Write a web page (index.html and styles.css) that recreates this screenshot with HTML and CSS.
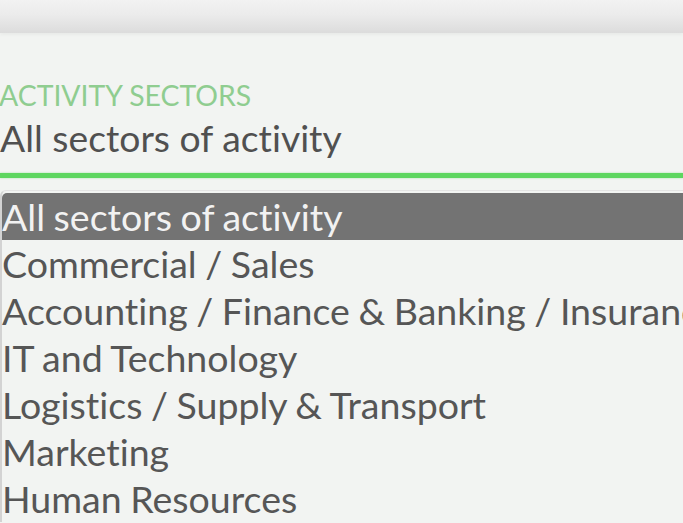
FILE: index.html
```html
<!DOCTYPE html>
<html lang="en">
<head>
<meta charset="utf-8">
<title>Activity sectors</title>
<link rel="stylesheet" href="styles.css">
</head>
<body>
<div class="topbar"></div>
<div class="field">
  <div class="field-label">ACTIVITY SECTORS</div>
  <div class="field-value">All sectors of activity</div>
  <div class="field-underline"></div>
</div>
<ul class="options">
  <li class="option selected">All sectors of activity</li>
  <li class="option">Commercial / Sales</li>
  <li class="option">Accounting / Finance &amp; Banking / Insurance</li>
  <li class="option">IT and Technology</li>
  <li class="option">Logistics / Supply &amp; Transport</li>
  <li class="option">Marketing</li>
  <li class="option">Human Resources</li>
</ul>
</body>
</html>
```
FILE: styles.css
```css
html, body {
  margin: 0;
  padding: 0;
}
body {
  width: 683px;
  height: 523px;
  overflow: hidden;
  background: #f2f4f2;
  font-family: Lato, "Open Sans", sans-serif;
  font-variant-ligatures: none;
  color: #555;
}
.topbar {
  height: 33px;
  background: linear-gradient(#f2f2f2 0%, #ebebeb 45%, #dcdcdc 100%);
  box-shadow: 0 2px 3px rgba(0,0,0,0.04);
}
.field {
  padding-top: 45px;
}
.field-label {
  font-size: 28.4px;
  line-height: 34px;
  color: #8fcd90;
  white-space: nowrap;
  margin-left: -1px;
}
.field-value {
  margin-top: 5.5px;
  font-size: 37.3px;
  line-height: 40px;
  color: #505050;
  white-space: nowrap;
}
.field-underline {
  margin-top: 15.5px;
  height: 5px;
  background: #5dd65f;
  box-shadow: 0 0 2px rgba(93,214,95,0.6);
}
.options {
  list-style: none;
  margin: 12px 0 0 0;
  padding: 2px 0 0 0;
  border-left: 2px solid #d3d3d3;
  border-top: 1px solid #e4e4e4;
  border-top-left-radius: 6px;
}
.option {
  height: 47px;
  line-height: 47px;
  font-size: 37.5px;
  white-space: nowrap;
  color: #565656;
  word-spacing: -1px;
}
.option.selected {
  background: #737373;
  color: #f2f2f2;
  border-top-left-radius: 5px;
}
```
